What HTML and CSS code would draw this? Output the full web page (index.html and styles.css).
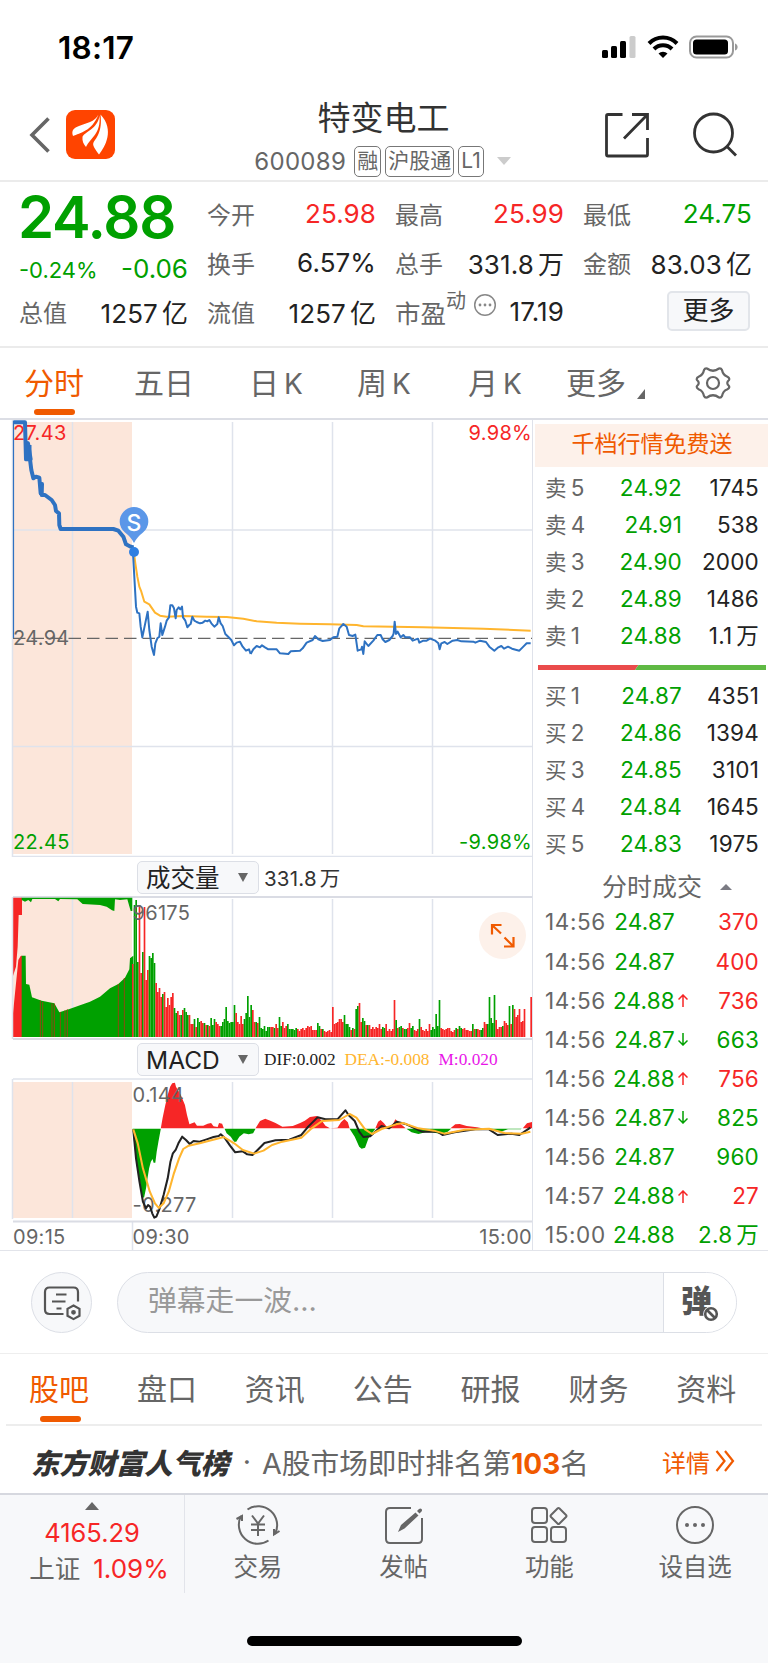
FILE: index.html
```html
<!DOCTYPE html>
<html lang="zh-CN">
<head>
    <meta charset="UTF-8">
    <meta name="viewport" content="width=device-width, initial-scale=1.0">
    <title>特变电工 600089</title>
    <link rel="stylesheet" href="styles.css">
</head>
<body>
    <div class="status-bar">
        <span class="clock">18:17</span>
        <svg class="status-icons" width="138" height="24" viewBox="0 0 138 24">
            <rect x="2" y="15" width="6" height="8" rx="1.5"/>
            <rect x="11" y="11" width="6" height="12" rx="1.5"/>
            <rect x="20" y="6" width="6" height="17" rx="1.5"/>
            <rect x="29.5" y="1" width="6" height="22" rx="1.5" fill="#ccc"/>
            <g fill="none" stroke="#000" stroke-width="4">
                <path d="M49 8.500a19.500 19.500 0 0 1 28 0"/>
                <path d="M54 14a12.500 12.500 0 0 1 18 0"/>
            </g>
            <path d="M58.500 18.500a6.500 6.500 0 0 1 9 0L63 23z"/>
            <rect x="90" y="1.5" width="43" height="21" rx="6.5" fill="none" stroke="#999" stroke-width="2"/>
            <rect x="93" y="4.5" width="35" height="15" rx="3.5"/>
            <path d="M135 8.500c3.500 1 3.500 6 0 7z" fill="#999"/>
        </svg>
    </div>

    <header class="header">
        <div class="header-left">
            <svg width="22" height="36" viewBox="0 0 22 36"><path d="M19.500 1.500L3 18l16.500 16.500" fill="none" stroke="#666" stroke-width="3.600"/></svg>
            <svg class="logo" width="49" height="49" viewBox="0 0 49 49">
                <rect width="49" height="49" rx="9" fill="#ff4400"/>
                <path d="M32.500 4.500C29 12 20 13 13 16c-5 2-8 4-6 10 7-3 19-5 25.500-21.500zM33.500 5.500C32 19 18 22 16.500 27c-.5 4 1 7 3.500 10 5-10 15-13 13.500-31.500zM34.500 4.500c2 17-4 23-7 28-1.500 3 2 7 5.500 12C39 37 49 20 34.500 4.500z" fill="#fff"/>
            </svg>
        </div>
        <div class="header-title">
            <h1>特变电工</h1>
            <div class="stock-code">
                <span class="code">600089</span>
                <span class="tag">融</span>
                <span class="tag">沪股通</span>
                <span class="tag">L1</span>
                <svg width="14" height="8" viewBox="0 0 14 8"><path d="M0 0h14L7 8z" fill="#ccc"/></svg>
            </div>
        </div>
        <div class="header-right">
            <svg width="46" height="46" viewBox="0 0 46 46" fill="none" stroke="#333" stroke-width="2.800">
                <path d="M18.500 2.500H4Q2.500 2.500 2.500 4v38.500q0 1.500 1.500 1.500h38q1.500 0 1.500-1.500V26M28 2.500h15.500V18M43 3L20 26.500"/>
            </svg>
            <svg width="46" height="46" viewBox="0 0 46 46" fill="none" stroke="#333" stroke-width="2.800">
                <circle cx="21.5" cy="21" r="19"/><path d="M35 34.500l9 9"/>
            </svg>
        </div>
    </header>

    <section class="quote">
        <div class="price-box">
            <div class="price">24.88</div>
            <div class="change"><span class="pct">-0.24%</span><span>-0.06</span></div>
        </div>
        <div class="cell"><label>今开</label><b class="up">25.98</b></div>
        <div class="cell"><label>最高</label><b class="up">25.99</b></div>
        <div class="cell"><label>最低</label><b class="down">24.75</b></div>
        <div class="cell"><label>换手</label><b>6.57%</b></div>
        <div class="cell"><label>总手</label><b>331.8<i>万</i></b></div>
        <div class="cell"><label>金额</label><b>83.03<i>亿</i></b></div>
        <div class="cell"><label>总值</label><b>1257<i>亿</i></b></div>
        <div class="cell"><label>流值</label><b>1257<i>亿</i></b></div>
        <div class="cell pe">
            <label>市盈<sup>动</sup></label>
            <svg class="info" width="24" height="24" viewBox="0 0 24 24"><circle cx="12" cy="12" r="10.3" fill="none" stroke="#888" stroke-width="1.5"/><g fill="#888"><circle cx="7" cy="12" r="1.4"/><circle cx="12" cy="12" r="1.4"/><circle cx="17" cy="12" r="1.4"/></g></svg>
            <b>17.19</b>
        </div>
        <div class="cell cell-more"><button class="more-btn">更多</button></div>
    </section>

    <nav class="period-tabs">
        <a class="active">分时</a>
        <a>五日</a>
        <a>日<em>K</em></a>
        <a>周<em>K</em></a>
        <a>月<em>K</em></a>
        <a class="with-corner">更多<svg width="8" height="10" viewBox="0 0 8 10"><path d="M8 0v10H0z" fill="#666"/></svg></a>
        <a class="gear"><svg width="36" height="34" viewBox="0 0 36 34" fill="none" stroke="#666" stroke-width="2.200" stroke-linejoin="round">
            <path d="M12 2.500Q18 7 24 2.500Q26 2 27 4Q28 9 32 10.500Q35 12 34 14Q30.500 17 34 20Q35 22 32 23.500Q28 25 27 30Q26 32 24 31.500Q18 27 12 31.500Q10 32 9 30Q8 25 4 23.500Q1 22 2 20Q5.500 17 2 14Q1 12 4 10.500Q8 9 9 4Q10 2 12 2.500z"/>
            <circle cx="18" cy="17" r="6"/>
        </svg></a>
    </nav>

    <main class="market">
        <div class="charts">
            <svg class="chart" width="532" height="437" viewBox="0 420 532 437">
                <rect x="13" y="422" width="119" height="432" fill="#fce6da"/>
                <path class="grid" d="M72.500 422v432M232.500 422v432M332.500 422v432M432.500 422v432M13 530h519M13 746.500h519M12.500 420v437M13 856.500h519"/>
                <path d="M13 638.300h519" stroke="#666" stroke-width="1.300" stroke-dasharray="12.500 6" fill="none"/>
                <path d="M13.500 421v217" stroke="#2e72c2" stroke-width="1.200"/>
                <text class="axis up" x="13" y="440">27.43</text>
                <text class="axis up" x="532" y="440" text-anchor="end">9.98%</text>
                <text class="axis" x="13" y="644.5">24.94</text>
                <text class="axis down" x="13" y="849">22.45</text>
                <text class="axis down" x="532" y="849" text-anchor="end">-9.98%</text>
                <g transform="translate(0 410) scale(.33333)" fill="none" stroke-linejoin="round">
                    <polyline stroke="#2e72c2" stroke-width="12" points="40,37 75,37 78,148 92,148 84,100 94,180 100,205 108,200 118,203 122,250 126,222 125,255 135,255 155,270 165,285 168,303 177,310 178,345 182,357 340,357 355,362 370,380 378,403 392,410 401,412"/>
                    <path stroke="#2e72c2" stroke-width="7" d="M82 95V148M91 105V148"/>
                    <polyline stroke="#ffb52e" stroke-width="6" points="402,430 406,460 412,500 418,530 424,545 433,575 448,583 465,608 480,617 500,620 550,618 620,620 680,621 730,626 770,634 830,638 900,641 990,643 1070,645 1090,649 1270,652 1450,656 1592,662"/>
                    <polyline stroke="#2e72c2" stroke-width="6" points="399,430 408,590 412,608 418,610 422,650 427,682 443,605 448,660 455,710 462,735 466,700 472,685 478,680 482,640 487,675 495,650 500,632 507,622 511,586 517,586 522,595 527,625 530,600 536,592 541,598 546,590 549,622 556,632 562,652 568,645 572,642 577,620 583,632 590,636 600,640 608,638 616,632 622,634 628,630 634,640 643,650 652,642 656,622 662,640 668,648 676,672 686,682 694,690 702,706 710,698 720,695 728,710 738,722 747,718 752,732"/>
                    <polyline transform="translate(750 0)" stroke="#2e72c2" stroke-width="6" points="2,732 10,718 20,708 30,712 36,706 45,712 55,718 80,718 90,730 115,732 122,724 150,722 158,715 170,698 188,690 195,678 205,688 218,693 240,690 250,682 262,680 268,655 280,642 290,650 297,675 308,678 316,674 323,722 334,718 336,710 340,732 344,694 355,708 370,692 382,675 392,675 398,688 406,696 418,690 428,678 431,670 434,635 438,672 443,665 452,682 460,675 466,682 480,682 488,692 504,686 508,698 520,692 530,692 540,686 556,692 565,700 569,718 574,700 584,696 592,702 608,692 622,690 634,694 670,695 676,698 690,692 708,696 718,710 733,722 745,712 754,708 762,716 774,710 786,716 808,722 820,710 830,700 842,700"/>
                </g>
                <path d="M134 543q-3-6-9-10.500a14.300 14.300 0 1 1 18 0Q137 537 134 543z" fill="#5b97e8"/>
                <circle cx="134" cy="552" r="5" fill="#2e7fe2"/>
                <text x="134" y="530.5" text-anchor="middle" class="flag">S</text>
            </svg>

            <div class="toolbar">
                <button class="select">成交量<svg width="10" height="9" viewBox="0 0 10 9"><path d="M0 0h10L5 9z" fill="#666"/></svg></button>
                <span class="vol">331.8<i>万</i></span>
            </div>

            <svg class="chart" width="532" height="144" viewBox="0 896 532 144">
                <path class="grid" d="M232.500 899v138M332.500 899v138M432.500 899v138"/>
                <rect x="13" y="897" width="119" height="140" fill="#fce6da"/>
                <path class="grid" d="M72.500 899v138"/>
                <path class="frame" d="M13 897h519M13 1039h519"/>
                <g transform="translate(0 850) scale(.33333)">
                    <polygon fill="#f62626" points="39,561 39,490 45,430 50,380 55,330 62,318 66,317 66,561"/>
                    <polygon fill="#00a000" points="65,561 65,317 77,317 78,402 88,404 96,442 125,452 163,460 178,487 200,480 240,466 270,455 300,440 330,415 355,402 375,383 388,358 390,325 400,317 400,561"/>
                    <path d="M121 452V561M128 456V561M156 460V561M163 461V561M181 486V561M195 481V561M202 478V561M355 402V561M373 384V561" stroke="#8c4a10" stroke-width="3"/>
                    <polygon fill="#f62626" points="39,143 66,143 66,195 56,195 53,290 48,350 39,378"/>
                    <polygon fill="#00a000" points="65,143 397,143 397,183 392,183 382,148 360,150 345,148 343,183 336,181 320,170 300,165 248,162 232,148 180,147 175,154 165,147 97,147 93,157 85,150 75,155 65,150"/>
                </g>
                <g id="volumeBars"></g>
                <path class="grid" d="M12.500 897v142"/>
                <text class="axis" x="132.5" y="919.5">96175</text>
                <circle cx="502.5" cy="935.5" r="23.5" fill="#fdf1ea"/>
                <path d="M501.500 925h-9.500v9.500M492.500 925.500l8.500 8M504 946.500h9.500V937M513 946l-8.500-8.500" fill="none" stroke="#f05a00" stroke-width="2.200"/>
            </svg>

            <div class="toolbar toolbar-macd">
                <button class="select">MACD<svg width="10" height="9" viewBox="0 0 10 9"><path d="M0 0h10L5 9z" fill="#666"/></svg></button>
                <span class="ind">DIF:0.002</span>
                <span class="ind dea">DEA:-0.008</span>
                <span class="ind macd">M:0.020</span>
            </div>

            <svg class="chart" width="532" height="172" viewBox="0 1078 532 172">
                <rect x="13" y="1082" width="119" height="136" fill="#fce6da"/>
                <path class="grid" d="M12.500 1079v140M13 1079h519M72.500 1082v136M232.500 1082v136M332.500 1082v136M432.500 1082v136M132.500 1221v29"/>
                <path class="frame" d="M13 1221.500h519"/>
                <g transform="translate(0 1035) scale(.34439 .33333)">
                    <g fill="#00a000">
                        <polygon points="385,281 467,281 460,320 455,350 451,383 446,383 443,372 438,380 433,400 429,425 424,460 418,490 412,480 405,430 398,400 390,330"/>
                        <polygon points="652,281 658,295 670,305 680,320 686,320 695,305 708,295 722,298 735,295 742,281"/>
                        <polygon points="1015,281 1030,305 1043,335 1050,341 1060,338 1070,310 1080,295 1090,281"/>
                        <polygon points="1180,281 1195,292 1215,297 1235,292 1255,292 1280,297 1300,290 1310,281"/>
                        <polygon points="1415,281 1450,292 1475,283 1512,283 1515,281"/>
                    </g>
                    <g fill="#f62626">
                        <polygon points="467,280 472,250 480,210 487,180 494,155 500,145 508,143 511,155 525,180 537,210 543,240 550,268 565,262 572,272 590,272 603,266 613,264 620,274 632,276 636,264 645,266 650,280"/>
                        <polygon points="742,280 755,258 770,251 785,257 800,264 820,275 850,273 870,265 885,257 900,246 920,243 935,258 945,272 958,280 980,278 990,262 1000,252 1010,262 1015,280"/>
                        <polygon points="1090,280 1098,260 1105,255 1115,265 1125,278 1140,270 1148,253 1156,260 1178,280"/>
                        <polygon points="1308,280 1322,268 1335,267 1355,273 1385,277 1400,280"/>
                        <polygon points="1518,280 1530,265 1546,261 1546,280"/>
                    </g>
                </g>
                <text class="axis" x="132.5" y="1101.5">0.144</text>
                <text class="axis" x="132.5" y="1212">-0.277</text>
                <g transform="translate(0 1035) scale(.34439 .33333)" fill="none" stroke-width="6" stroke-linejoin="round">
                    <polyline stroke="#222" points="387,283 395,370 405,440 415,500 424,520 430,510 436,515 442,535 448,548 454,545 462,525 475,480 487,430 495,380 502,355 510,345 518,325 529,305 540,315 551,327 562,318 580,320 600,313 620,306 635,303 641,298 652,308 668,332 683,352 705,349 718,358 733,360 745,348 768,324 800,316 840,314 875,300 895,275 922,247 945,253 980,253 1003,226 1012,240 1030,258 1043,290 1055,306 1075,304 1108,273 1130,280 1152,260 1180,268 1225,290 1270,290 1285,300 1320,292 1380,283 1420,283 1445,300 1485,296 1508,300 1540,278"/>
                    <polyline stroke="#ffb52e" points="387,283 400,325 415,400 435,470 450,505 461,519 475,505 490,470 505,415 520,370 532,342 548,332 580,325 605,318 650,306 680,325 705,345 738,356 765,347 790,330 820,320 875,308 905,280 935,258 985,255 1015,237 1035,248 1060,283 1080,297 1108,282 1150,268 1170,264 1215,280 1260,287 1290,296 1350,284 1420,281 1465,294 1515,296 1540,290"/>
                </g>
                <text class="axis" x="13" y="1244">09:15</text>
                <text class="axis" x="132.5" y="1244">09:30</text>
                <text class="axis" x="532" y="1244" text-anchor="end">15:00</text>
            </svg>
        </div>

        <aside class="depth">
            <div class="promo">千档行情免费送</div>
            <div class="levels">
                <div class="level"><span>卖<em>5</em></span><span class="down">24.92</span><span>1745</span></div>
                <div class="level"><span>卖<em>4</em></span><span class="down">24.91</span><span>538</span></div>
                <div class="level"><span>卖<em>3</em></span><span class="down">24.90</span><span>2000</span></div>
                <div class="level"><span>卖<em>2</em></span><span class="down">24.89</span><span>1486</span></div>
                <div class="level"><span>卖<em>1</em></span><span class="down">24.88</span><span>1.1<i>万</i></span></div>
            </div>
            <svg class="ratio" width="228" height="5" viewBox="0 0 228 5"><path d="M0 0h100.500L97 5H0z" fill="#ea4b4b"/><path d="M100.500 0H228v5H97z" fill="#5fb944"/></svg>
            <div class="levels">
                <div class="level"><span>买<em>1</em></span><span class="down">24.87</span><span>4351</span></div>
                <div class="level"><span>买<em>2</em></span><span class="down">24.86</span><span>1394</span></div>
                <div class="level"><span>买<em>3</em></span><span class="down">24.85</span><span>3101</span></div>
                <div class="level"><span>买<em>4</em></span><span class="down">24.84</span><span>1645</span></div>
                <div class="level"><span>买<em>5</em></span><span class="down">24.83</span><span>1975</span></div>
            </div>
            <div class="ticks-title">分时成交<svg width="12" height="6" viewBox="0 0 12 6"><path d="M0 6h12L6 0z" fill="#7b7b83"/></svg></div>
            <div class="ticks">
                <div class="tick"><span>14:56</span><span class="down">24.87</span><span class="arrow"></span><span class="up">370</span></div>
                <div class="tick"><span>14:56</span><span class="down">24.87</span><span class="arrow"></span><span class="up">400</span></div>
                <div class="tick"><span>14:56</span><span class="down">24.88</span><span class="arrow up"><svg width="10" height="13" viewBox="0 0 10 13"><path d="M5 13V1M.5 5.500L5 1l4.500 4.500"/></svg></span><span class="up">736</span></div>
                <div class="tick"><span>14:56</span><span class="down">24.87</span><span class="arrow down"><svg width="10" height="13" viewBox="0 0 10 13"><path d="M5 0v12M.5 7.500L5 12l4.500-4.500"/></svg></span><span class="down">663</span></div>
                <div class="tick"><span>14:56</span><span class="down">24.88</span><span class="arrow up"><svg width="10" height="13" viewBox="0 0 10 13"><path d="M5 13V1M.5 5.500L5 1l4.500 4.500"/></svg></span><span class="up">756</span></div>
                <div class="tick"><span>14:56</span><span class="down">24.87</span><span class="arrow down"><svg width="10" height="13" viewBox="0 0 10 13"><path d="M5 0v12M.5 7.500L5 12l4.500-4.500"/></svg></span><span class="down">825</span></div>
                <div class="tick"><span>14:56</span><span class="down">24.87</span><span class="arrow"></span><span class="down">960</span></div>
                <div class="tick"><span>14:57</span><span class="down">24.88</span><span class="arrow up"><svg width="10" height="13" viewBox="0 0 10 13"><path d="M5 13V1M.5 5.500L5 1l4.500 4.500"/></svg></span><span class="up">27</span></div>
                <div class="tick"><span>15:00</span><span class="down">24.88</span><span class="arrow"></span><span class="down">2.8<i>万</i></span></div>
            </div>
        </aside>
    </main>

    <div class="danmu">
        <button class="danmu-settings">
            <svg width="38" height="36" viewBox="0 0 38 36" fill="none" stroke="#555" stroke-width="2.200">
                <path d="M20.500 29H6.500Q2 29 2 24.500V7Q2 2.500 6.500 2.500h24Q35 2.500 35 7v9.500"/>
                <path d="M13 9.500h10.500M9 16.500h13.500M13.500 23.500h5"/>
                <path d="M30.500 20.500l6 3.300v7l-6 3.300-6-3.300v-7z"/>
                <circle cx="30.5" cy="27.3" r="1.3" fill="#555"/>
            </svg>
        </button>
        <div class="danmu-input">
            <span class="placeholder">弹幕走一波...</span>
            <span class="danmu-toggle">弹<svg width="16" height="16" viewBox="0 0 16 16"><circle cx="8" cy="8" r="5.8" fill="#fff" stroke="#fff" stroke-width="4"/><circle cx="8" cy="8" r="5.8" fill="none" stroke="#555" stroke-width="2.6"/><path d="M4 4l8 8" stroke="#555" stroke-width="2.6"/></svg></span>
        </div>
    </div>

    <nav class="info-tabs">
        <a class="active">股吧</a>
        <a>盘口</a>
        <a>资讯</a>
        <a>公告</a>
        <a>研报</a>
        <a>财务</a>
        <a>资料</a>
    </nav>

    <div class="rank">
        <span class="rank-name">东方财富人气榜</span>
        <span class="rank-dot">·</span>
        <span class="rank-text">A股市场即时排名第<b>103</b>名</span>
        <span class="rank-more">详情<svg width="20" height="22" viewBox="0 0 20 22" fill="none" stroke="#f05a00" stroke-width="2.200"><path d="M1.500 1l8 10-8 10M10 1l8 10-8 10"/></svg></span>
    </div>

    <footer class="bottom-bar">
        <div class="index">
            <svg width="14" height="8" viewBox="0 0 14 8"><path d="M0 8h14L7 0z" fill="#666"/></svg>
            <div class="up">4165.29</div>
            <div class="index-row"><span>上证</span><span class="up">1.09%</span></div>
        </div>
        <div class="action">
            <svg width="46" height="40" viewBox="0 0 46 40" fill="none" stroke="#666" stroke-width="2">
                <path d="M12.500 4.500A19 19 0 0 1 40 29M33.500 35.500A19 19 0 0 1 6 11"/>
                <path d="M1.500 14L7 11v5M44.500 26L39 29.500V24"/>
                <path d="M17 10.500l6 8 6-8M23 18.500V31M16 19.500h14M16 25h14"/>
            </svg>
            <span>交易</span>
        </div>
        <div class="action">
            <svg width="42" height="40" viewBox="0 0 42 40" fill="none" stroke="#666" stroke-width="2">
                <path d="M28 3H7Q3 3 3 7v27q0 4 4 4h28q4 0 4-4V13"/>
                <path d="M15 27l3-7L32.500 7.500l3 3L21.500 23.500zM34 6l2-2q1.500-1 2.500 0t0 2.500l-2 2z" fill="#666" stroke="none"/>
            </svg>
            <span>发帖</span>
        </div>
        <div class="action">
            <svg width="40" height="40" viewBox="0 0 40 40" fill="none" stroke="#666" stroke-width="2">
                <rect x="3" y="3" width="15" height="15" rx="3"/>
                <rect x="3" y="22" width="15" height="15" rx="3"/>
                <rect x="22" y="22" width="15" height="15" rx="3"/>
                <path d="M28.500 3.500q1-1 2 0l6.500 6.500q1 1 0 2l-6.500 6.500q-1 1-2 0L22 12q-1-1 0-2z"/>
            </svg>
            <span>功能</span>
        </div>
        <div class="action">
            <svg width="40" height="40" viewBox="0 0 40 40"><circle cx="20" cy="20" r="18" fill="none" stroke="#666" stroke-width="2"/><g fill="#666"><circle cx="12" cy="20" r="2"/><circle cx="20" cy="20" r="2"/><circle cx="28" cy="20" r="2"/></g></svg>
            <span>设自选</span>
        </div>
        <div class="home-indicator"></div>
    </footer>

    <script>
        // One entry per minute from 09:30: r = up, g = down, number = bar height
        const volumes = 'r73 g132 g137 g75 r132 r64 g85 r130 r57 r67 g81 g79 g84 g74 r54 r45 r49 r40 g43 r45 r30 r39 r32 r40 r44 g29 g24 r26 r22 g22 r27 g29 g25 g22 r22 r13 r13 g18 r10 g19 g15 r16 r14 g14 r12 g12 r11 g19 g12 g18 r15 r13 r11 g11 g15 g18 g30 g16 g14 g15 ' +
            'g15 g32 r24 r15 r13 r21 r13 g18 g24 g41 g20 g32 r27 r15 g15 r14 g20 g9 g8 g11 g6 g10 g10 r10 r10 g9 r13 r9 g20 g11 r15 r9 r11 g13 g8 g8 g8 g7 g9 r8 r6 r8 r9 r7 r9 r11 r10 r11 r7 r7 r7 g14 g11 r8 g8 r6 r5 r6 r7 r5 ' +
            'r30 r13 r14 r15 r18 r18 r15 g22 g13 g13 g10 r7 g9 r8 g28 g31 r34 r15 g19 g16 r12 g12 r12 r8 r10 r8 r10 r9 r13 r8 g10 g9 r13 r6 r8 r6 r8 r37 g17 r9 g10 g11 r9 g8 g8 r9 r14 g9 g11 r7 r6 r8 g18 r10 r7 r6 r8 r6 r13 g7 ' +
            'g10 g8 g23 g11 g37 r9 r8 r7 r8 r9 r9 r6 r5 r7 g9 r8 g11 g9 r8 r9 r7 r7 r6 r6 g13 r8 g8 r8 r7 g7 g9 r15 r13 g13 g40 g19 g14 g42 r17 r8 r10 r10 g11 r16 r14 r12 g31 r13 g32 r28 r20 r22 r28 r15 r16 r28 r0 r0 r0 r40';

        const step = 400 / 240;
        const bars = document.getElementById('volumeBars');
        volumes.split(' ').forEach((item, i) => {
            const height = Number(item.slice(1));
            const bar = document.createElementNS('http://www.w3.org/2000/svg', 'rect');
            bar.setAttribute('x', 132 + i * step);
            bar.setAttribute('y', 1037 - height);
            bar.setAttribute('width', step);
            bar.setAttribute('height', height);
            bar.setAttribute('fill', item[0] === 'r' ? '#f62626' : '#00a000');
            bars.appendChild(bar);
        });
    </script>
</body>
</html>
```
FILE: styles.css
```css
* {
    box-sizing: border-box;
}
body {
    margin: 0;
    width: 768px;
    height: 1663px;
    overflow: hidden;
    background: #fff;
    color: #222;
    font-family: Inter, "Noto Sans CJK SC", sans-serif;
    font-weight: 400;
}
button {
    font-family: inherit;
    color: inherit;
    padding: 0;
}
svg {
    display: block;
    flex: none;
}
i, em {
    font-style: normal;
}
.up { color: #f62626; }
.down { color: #00a000; }

/* status bar */
.status-bar {
    height: 96px;
    padding: 35px 30px 0 58px;
    display: flex;
    justify-content: space-between;
}
.clock {
    font-size: 31.5px;
    line-height: 25px;
    font-weight: 600;
    letter-spacing: 0.2px;
    color: #000;
}

/* header */
.header {
    height: 86px;
    border-bottom: 2px solid #ebebeb;
    display: grid;
    grid-template-columns: 200px 1fr 200px;
}
.header-left {
    padding: 14px 0 0 29px;
    display: flex;
    align-items: flex-start;
    gap: 15px;
}
.header-left svg:first-child {
    margin-top: 7px;
}
.header-title {
    display: flex;
    flex-direction: column;
    align-items: center;
}
.header-title h1 {
    margin: 2px 1px 0 0;
    font-size: 33px;
    line-height: 40px;
    font-weight: 400;
    color: #333;
}
.stock-code {
    display: flex;
    align-items: center;
    gap: 4px;
    height: 30px;
    margin: 8px 3px 0 0;
    color: #666;
    white-space: nowrap;
}
.stock-code .code {
    font-size: 24px;
    letter-spacing: 0.3px;
    margin-right: 4px;
    width: 92px;
}
.stock-code svg {
    margin-left: 9px;
}
.tag {
    height: 31px;
    padding: 0 2px;
    border: 1.5px solid #777;
    border-radius: 5px;
    font-size: 21px;
    line-height: 28px;
}
.header-right {
    padding: 16px 30px 0 0;
    display: flex;
    justify-content: flex-end;
    gap: 42px;
}

/* quote */
.quote {
    height: 166px;
    padding: 7px 16px 0 20px;
    border-bottom: 2px solid #ebebeb;
    display: grid;
    grid-template-columns: repeat(4, 168px);
    grid-template-rows: 49px 49px 49px;
    column-gap: 20px;
}
.price-box {
    grid-row: span 2;
    color: #00a000;
}
.price {
    height: 60px;
    margin-left: -2px;
    font-size: 58px;
    line-height: 56px;
    font-weight: 600;
    letter-spacing: -1.2px;
}
.change {
    display: flex;
    justify-content: space-between;
    align-items: baseline;
    margin-left: -1px;
    line-height: 40px;
    font-size: 26px;
}
.change .pct {
    font-size: 22px;
}
.cell {
    display: flex;
    align-items: center;
    justify-content: space-between;
    white-space: nowrap;
}
.cell label {
    font-size: 24px;
    color: #666;
    margin-left: -1px;
}
.cell b {
    font-size: 26px;
    font-weight: 400;
    letter-spacing: 0.1px;
}
.cell b i {
    margin-left: 4px;
}
.pe label {
    font-size: 25.5px;
}
.cell sup {
    font-size: 20px;
    line-height: 0;
    vertical-align: 15px;
}
.cell .info {
    margin: -14px 3px 0 -2px;
}
.cell-more {
    justify-content: flex-end;
    padding: 0 2px 2px 0;
}
.more-btn {
    width: 83px;
    height: 40px;
    border: 2px solid #e2e5ea;
    border-radius: 5px;
    background: #f7f8fa;
    font-size: 26px;
    line-height: 34px;
}

/* period tabs */
.period-tabs {
    height: 72px;
    border-bottom: 2px solid #dcdee5;
    padding-left: 24px;
    display: grid;
    grid-template-columns: 110px 115px 108px 111px 98px 129px 1fr;
    font-size: 30px;
    line-height: 70px;
    color: #666;
}
.period-tabs a {
    position: relative;
    white-space: nowrap;
}
.period-tabs em {
    margin-left: 5px;
    font-size: 28px;
}
.active {
    color: #f05a00;
}
.period-tabs .active::after,
.info-tabs .active::after {
    content: "";
    position: absolute;
    left: 10px;
    bottom: 4px;
    width: 41px;
    height: 6px;
    border-radius: 3px;
    background: #f05a00;
}
.with-corner {
    display: flex;
    gap: 11px;
}
.with-corner svg {
    margin-top: 41px;
}
.gear svg {
    margin-top: 18px;
}

/* charts and order book */
.market {
    display: grid;
    grid-template-columns: 533px 235px;
    grid-template-rows: 830px;
    height: 831px;
    border-bottom: 1px solid #e2e4ea;
}
.charts {
    border-right: 1.5px solid #dfe2ea;
}
.grid {
    fill: none;
    stroke: #dfe3ec;
    stroke-width: 1.5;
}
.frame {
    fill: none;
    stroke: #dadce4;
    stroke-width: 2;
}
.axis {
    font-size: 20px;
    fill: #666;
    letter-spacing: 0.3px;
}
.axis.up { fill: #f62626; }
.axis.down { fill: #00a000; }
.flag {
    font-size: 23px;
    font-weight: 500;
    fill: #fff;
}
.toolbar {
    height: 39px;
    padding: 4px 0 0 137px;
    display: flex;
    align-items: flex-start;
}
.toolbar-macd {
    height: 38px;
    padding-top: 3px;
}
.select {
    width: 122px;
    height: 33px;
    padding: 0 10px 0 8px;
    margin-right: 5px;
    border: 1.5px solid #dcdfe6;
    border-radius: 5px;
    background: #f7f8fa;
    display: flex;
    align-items: center;
    justify-content: space-between;
    font-size: 24.5px;
    line-height: 28px;
}
.vol {
    font-size: 20.5px;
    line-height: 35px;
    letter-spacing: 0.2px;
    color: #333;
}
.vol i {
    margin-left: 3px;
}
.ind {
    font-family: "Liberation Serif", serif;
    font-size: 17.3px;
    line-height: 34px;
    margin-right: 9px;
}
.dea { color: #ffb52e; }
.macd { color: #e815e8; }

.depth {
    padding-left: 2px;
}
.promo {
    height: 43px;
    margin: 4px 0 2px;
    background: #fdf1ea;
    color: #f05a00;
    text-align: center;
    font-size: 23px;
    line-height: 40px;
    padding-left: 1px;
}
.level {
    height: 37.1px;
    display: grid;
    grid-template-columns: 50px 87px 77px;
    padding-left: 10px;
    align-items: center;
    font-size: 22.5px;
    line-height: 36px;
    letter-spacing: 0.2px;
    white-space: nowrap;
}
.level span:first-child {
    color: #666;
    font-size: 21.5px;
}
.level em {
    font-size: 22.5px;
    margin-left: 4px;
}
.level span + span {
    text-align: right;
}
.level i, .tick i {
    margin-left: 4px;
}
.ratio {
    margin: 11px 0 7px 3px;
}
.ticks-title {
    height: 38px;
    margin-top: 5px;
    padding-left: 67px;
    display: flex;
    align-items: center;
    gap: 18px;
    color: #666;
    font-size: 25px;
    line-height: 36px;
}
.ticks {
    margin-top: -3px;
}
.tick {
    height: 39.1px;
    display: grid;
    grid-template-columns: 62px 68px 16px 68px;
    padding-left: 10px;
    align-items: center;
    font-size: 22.5px;
    line-height: 36px;
    letter-spacing: 0.2px;
    white-space: nowrap;
}
.tick span:first-child {
    color: #666;
    letter-spacing: 0.6px;
}
.tick span:nth-child(2),
.tick span:last-child {
    text-align: right;
}
.arrow svg {
    margin-left: 3px;
    fill: none;
    stroke: currentColor;
    stroke-width: 1.5;
}

/* comment bar */
.danmu {
    height: 103px;
    padding: 21px 31px 0;
    border-bottom: 1px solid #eee;
    display: flex;
    gap: 25px;
}
.danmu-settings {
    width: 61px;
    height: 61px;
    border: 1.5px solid #dcdfe6;
    border-radius: 50%;
    background: #f7f8fa;
    display: flex;
    align-items: center;
    justify-content: center;
}
.danmu-input {
    flex: 1;
    height: 61px;
    border: 1.5px solid #dcdfe6;
    border-radius: 31px;
    overflow: hidden;
    display: flex;
    background: #f7f8fa;
}
.placeholder {
    flex: 1;
    padding-left: 30px;
    font-size: 28.8px;
    line-height: 55px;
    color: #999;
}
.danmu-toggle {
    position: relative;
    width: 73px;
    border-left: 1.5px solid #dcdfe6;
    background: #fff;
    padding-left: 17px;
    font-size: 31px;
    line-height: 56px;
    font-weight: 900;
    color: #555;
}
.danmu-toggle svg {
    position: absolute;
    left: 39px;
    top: 33px;
    overflow: visible;
}

/* info tabs */
.info-tabs {
    height: 72px;
    margin: 0 6px;
    padding-left: 23px;
    border-bottom: 2px solid #ededed;
    display: grid;
    grid-template-columns: repeat(7, 107.9px);
    font-size: 30px;
    line-height: 71px;
    color: #666;
}
.info-tabs a {
    position: relative;
}
.info-tabs .active {
    color: #f05a00;
}
.info-tabs .active::after {
    left: 11px;
    bottom: 3px;
}

/* popularity ranking */
.rank {
    height: 67px;
    padding: 3px 33px 0 31px;
    display: flex;
    align-items: center;
    white-space: nowrap;
    font-size: 28.7px;
    color: #666;
}
.rank-name {
    width: 201px;
    font-size: 28.3px;
    font-weight: 900;
    font-style: italic;
    color: #333;
}
.rank-dot {
    width: 30px;
    text-align: center;
}
.rank-text b {
    font-weight: 700;
    color: #f05a00;
    font-size: 28px;
}
.rank-more {
    margin-left: auto;
    display: flex;
    align-items: center;
    gap: 5px;
    font-size: 24px;
    color: #f05a00;
}

/* bottom bar */
.bottom-bar {
    position: relative;
    height: 170px;
    border-top: 2px solid #d6d8df;
    background: #f7f8fa;
    display: grid;
    grid-template-columns: 185px repeat(4, 145.75px);
}
.index {
    height: 98px;
    padding-top: 7px;
    border-right: 1.5px solid #e2e4ea;
    display: flex;
    flex-direction: column;
    align-items: center;
    font-size: 25.5px;
    line-height: 36px;
    color: #666;
}
.index > .up {
    margin-top: 5px;
}
.index-row {
    display: flex;
    gap: 13px;
    padding-left: 14px;
}
.index-row .up {
    font-size: 26px;
}
.action {
    padding-top: 10px;
    display: flex;
    flex-direction: column;
    align-items: center;
    font-size: 24.5px;
    line-height: 36px;
    color: #666;
}
.action span {
    margin-top: 4px;
}
.home-indicator {
    position: absolute;
    left: 247px;
    bottom: 17px;
    width: 275px;
    height: 10px;
    border-radius: 5px;
    background: #000;
}
```
